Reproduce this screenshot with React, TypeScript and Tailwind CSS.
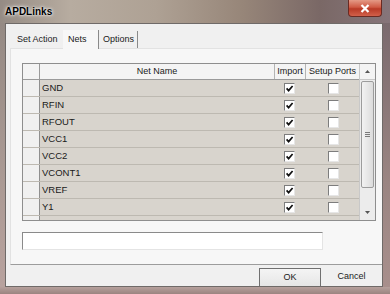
import React from 'react';

const nets = ['GND', 'RFIN', 'RFOUT', 'VCC1', 'VCC2', 'VCONT1', 'VREF', 'Y1'];

function CheckBox({ checked }: { checked: boolean }) {
  return (
    <div className="h-[11px] w-[11px] border-t border-l border-t-[#7d7d7d] border-l-[#7d7d7d] border-r border-b border-r-[#e6e6e6] border-b-[#e6e6e6] bg-white">
      {checked && (
        <svg width="9" height="9" viewBox="0 0 9 9" className="block">
          <path d="M1.6 4.4 L3.6 6.6 L7.6 2" fill="none" stroke="#111" strokeWidth="1.7" />
        </svg>
      )}
    </div>
  );
}

export default function App() {
  return (
    <div
      className="flex h-[294px] w-[390px] flex-col overflow-hidden text-[9px] text-[#1a1a1a]"
      style={{ fontFamily: '"Liberation Sans", Arial, sans-serif' }}
    >
      {/* title bar */}
      <div className="relative flex h-[23px] shrink-0 items-center bg-[linear-gradient(90deg,#958b84_0%,#b7aca0_18%,#aea194_40%,#978679_62%,#7a6866_82%,#86757a_100%)] pl-[5px]">
        <span className="text-[10px] font-semibold text-black [text-shadow:0_0_4px_#fff,0_0_2px_#fff]">APDLinks</span>
        <div className="absolute right-[8px] top-0 flex h-[17px] w-[34px] items-center justify-center rounded-b-[4px] border border-t-0 border-[#6b2a22] bg-[linear-gradient(180deg,#e49a86_0%,#cf5a44_45%,#b83a26_55%,#d2604a_100%)]">
          <svg width="10" height="9" viewBox="0 0 10 9">
            <path d="M1.5 1 L8.5 8 M8.5 1 L1.5 8" stroke="#fff" strokeWidth="2.2" />
          </svg>
        </div>
      </div>

      <div className="flex h-[264px] shrink-0">
        <div className="w-[5px] bg-[linear-gradient(180deg,#958a84,#ab9a94_60%,#b8a29e)]" />

        {/* client */}
        <div className="flex w-[378px] flex-col border border-[#6f6a68] bg-[#f0f0f0]">
          {/* tabs */}
          <div className="flex h-[24px] items-end pl-[6px]">
            <div className="flex h-[17px] w-[51px] items-center pl-[5px]">Set Action</div>
            <div className="relative -mb-px flex h-[19px] w-[36px] items-start border-r border-[#8a8a8a] bg-[#f7f7f7] pl-[5px] pt-[3px]">Nets</div>
            <div className="flex h-[17px] w-[39px] items-center border-r border-[#8a8a8a] pl-[4px]">Options</div>
          </div>

          {/* tab pane */}
          <div className="ml-[4px] flex h-[217px] flex-col border-t border-l border-[#e2e2e2] border-b border-b-[#9c9c9c] bg-[#f7f7f7] pl-[11px] pt-[14px]">
            {/* grid */}
            <div className="flex h-[158px] w-[354px] border border-[#8e8e8e]">
              <div className="flex w-[336px] flex-col">
                <div className="flex h-[16px] border-b border-[#9a9a9a] bg-[#f4f4f4]">
                  <div className="w-[17px] border-r border-[#9a9a9a]" />
                  <div className="flex w-[235px] items-center justify-center border-r border-[#b4b4b4]">Net Name</div>
                  <div className="flex w-[31px] items-center justify-center border-r border-[#b4b4b4]">Import</div>
                  <div className="flex w-[53px] items-center justify-center">Setup Ports</div>
                </div>
                {nets.map((n) => (
                  <div key={n} className="flex h-[17px] border-b border-[#bdb9b1]">
                    <div className="w-[17px] border-r border-[#8f8f8f] bg-[#f0f0f0]" />
                    <div className="flex w-[235px] items-center bg-[#d8d4cd] pl-[2px] text-[9.5px]">{n}</div>
                    <div className="flex w-[31px] items-center justify-center bg-[#d8d4cd] pr-[3px]">
                      <CheckBox checked />
                    </div>
                    <div className="flex w-[53px] items-center justify-center bg-[#d8d4cd] pl-[1px]">
                      <CheckBox checked={false} />
                    </div>
                  </div>
                ))}
                <div className="flex flex-1">
                  <div className="w-[17px] border-r border-[#8f8f8f] bg-[#f0f0f0]" />
                  <div className="flex-1 bg-[#d8d4cd]" />
                </div>
              </div>

              {/* scrollbar */}
              <div className="flex w-[16px] flex-col border-l border-[#c8c8c8] bg-[#ececec]">
                <div className="flex h-[16px] items-center justify-center border-b border-[#c8c8c8] bg-[#f4f4f4]">
                  <svg width="5" height="3" viewBox="0 0 5 3">
                    <path d="M0 3 L2.5 0 L5 3 Z" fill="#555" />
                  </svg>
                </div>
                <div className="mx-[1px] mt-px flex h-[107px] items-center justify-center rounded-[2px] border border-[#9c9c9c] bg-[linear-gradient(90deg,#f2f2f2,#dcdcdc)]">
                  <div className="flex flex-col gap-px">
                    <div className="h-px w-[5px] bg-[#7a7a7a]" />
                    <div className="h-px w-[5px] bg-[#7a7a7a]" />
                    <div className="h-px w-[5px] bg-[#7a7a7a]" />
                  </div>
                </div>
                <div className="flex-1" />
                <div className="flex h-[16px] items-center justify-center">
                  <svg width="5" height="3" viewBox="0 0 5 3">
                    <path d="M0 0 L2.5 3 L5 0 Z" fill="#555" />
                  </svg>
                </div>
              </div>
            </div>

            {/* text box */}
            <div className="mt-[11px] h-[18px] w-[301px] border-t border-l border-[#8a8a8a] border-r border-b border-r-[#e4e4e4] border-b-[#e4e4e4] bg-white" />
          </div>

          {/* buttons */}
          <div className="flex flex-1 items-end justify-end">
            <div className="flex h-[18px] w-[62px] items-center justify-center border-t border-l border-r border-[#707070] bg-[linear-gradient(180deg,#f4f4f4,#e6e6e6)]">OK</div>
            <div className="flex h-[18px] w-[61px] items-center justify-center bg-[#f0f0f0]">Cancel</div>
          </div>
        </div>

        <div className="w-[7px] bg-[linear-gradient(180deg,#7a6a6e,#9a8582_60%,#a88f8c)]" />
      </div>

      <div className="h-[7px] shrink-0 bg-[linear-gradient(180deg,#b6a09c,#9b8480)]" />
    </div>
  );
}
